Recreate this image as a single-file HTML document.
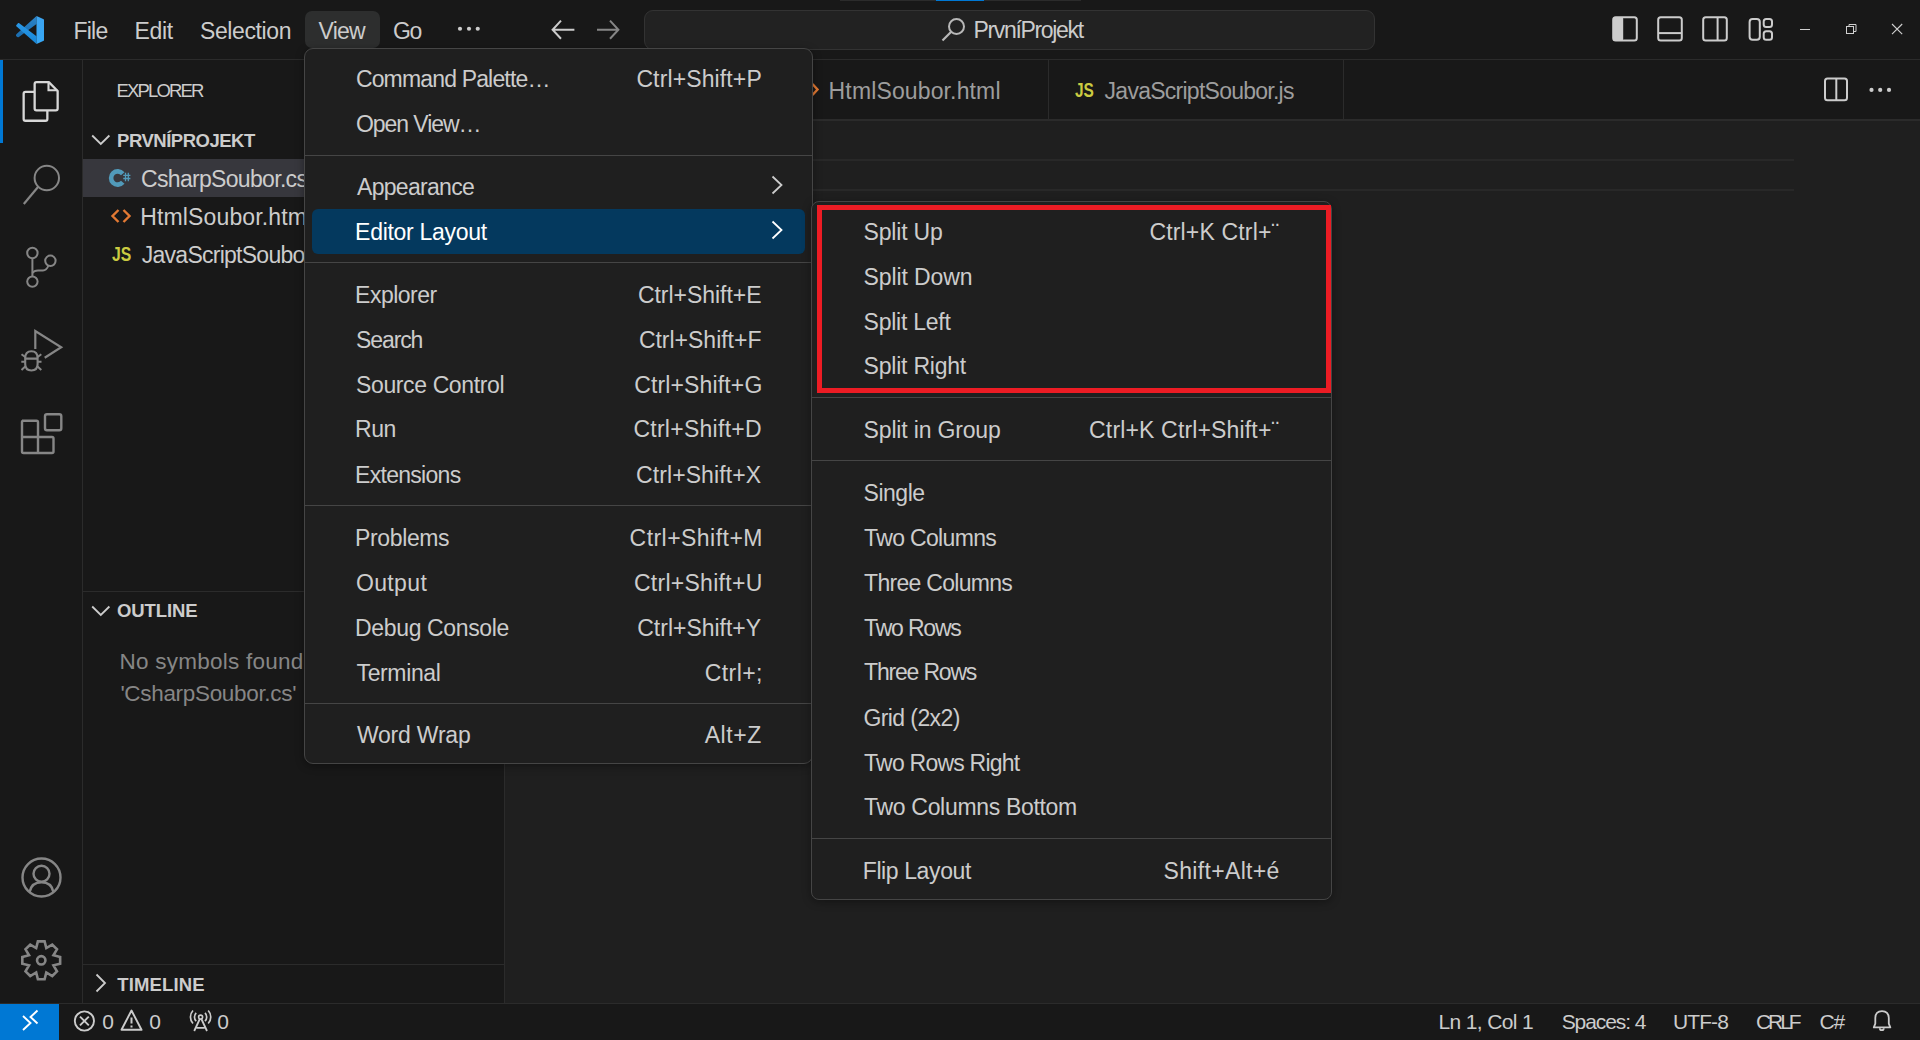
<!DOCTYPE html>
<html><head><meta charset="utf-8"><style>
html,body{margin:0;padding:0;width:1920px;height:1040px;overflow:hidden;background:#1f1f1f;}
body{position:relative;font-family:'Liberation Sans', sans-serif;}
body>div{position:absolute;box-sizing:border-box;}
.t{white-space:pre;}
</style></head><body>
<div style="left:0px;top:0px;width:1920px;height:1040px;background:#1f1f1f;"></div>
<div style="left:0px;top:0px;width:1920px;height:59px;background:#181818;"></div>
<div style="left:0px;top:59px;width:1920px;height:1px;background:#2b2b2b;"></div>
<div style="left:840px;top:0px;width:241px;height:1px;background:#2b2b2b;"></div>
<div style="left:936px;top:0px;width:48px;height:1px;background:#0078d4;"></div>
<div style="left:0px;top:60px;width:83px;height:943px;background:#181818;"></div>
<div style="left:82px;top:60px;width:1px;height:943px;background:#2b2b2b;"></div>
<div style="left:0px;top:60px;width:3px;height:83px;background:#0078d4;"></div>
<div style="left:83px;top:60px;width:421px;height:943px;background:#181818;"></div>
<div style="left:504px;top:60px;width:1px;height:943px;background:#2b2b2b;"></div>
<div style="left:505px;top:60px;width:1415px;height:59px;background:#181818;"></div>
<div style="left:505px;top:119px;width:1415px;height:2px;background:#2b2b2b;"></div>
<div style="left:1048px;top:60px;width:1px;height:59px;background:#2b2b2b;"></div>
<div style="left:1343px;top:60px;width:1px;height:59px;background:#2b2b2b;"></div>
<div style="left:560px;top:159px;width:1234px;height:2px;background:#282828;"></div>
<div style="left:560px;top:189px;width:1234px;height:2px;background:#282828;"></div>
<div style="left:0px;top:1003px;width:1920px;height:1px;background:#2b2b2b;"></div>
<div style="left:0px;top:1004px;width:1920px;height:36px;background:#181818;"></div>
<div style="left:0px;top:1004px;width:59px;height:36px;background:#0078d4;"></div>
<svg style="position:absolute;left:16px;top:16px;" width="28" height="28" viewBox="0 0 28 28">
<defs><linearGradient id="lg1" x1="0" y1="0" x2="0" y2="1"><stop offset="0" stop-color="#2b84c8"/><stop offset="1" stop-color="#1a6cae"/></linearGradient>
<linearGradient id="lg2" x1="0" y1="0" x2="0" y2="1"><stop offset="0" stop-color="#2b98e6"/><stop offset="1" stop-color="#1686d8"/></linearGradient>
<linearGradient id="lg3" x1="0" y1="0" x2="0" y2="1"><stop offset="0" stop-color="#3ca3ef"/><stop offset="1" stop-color="#36a8f6"/></linearGradient></defs>
<path d="M20.5 0 L20.5 8 L2.9 21 Q1.6 21.6 0.6 20.6 L0 19.8 Q-0.3 18.9 0.6 18.1 Z" fill="url(#lg1)"/>
<path d="M2.9 7 L20.5 20.2 L20.5 28 L0.6 10.6 Q-0.3 9.6 0.6 8.8 L1.2 8.2 Q2 6.6 2.9 7 Z" fill="url(#lg2)"/>
<path d="M20.5 0 L27.2 3.1 Q28.2 3.6 28.2 4.6 L28.2 23.4 Q28.2 24.4 27.2 24.9 L20.5 28 Z" fill="url(#lg3)"/>
</svg>
<div class="t" style="left:73.38px;top:20px;font-size:23px;line-height:23px;color:#cccccc;letter-spacing:-0.708px;">File</div>
<div class="t" style="left:134.38px;top:20px;font-size:23px;line-height:23px;color:#cccccc;letter-spacing:-0.292px;">Edit</div>
<div class="t" style="left:200.00px;top:20px;font-size:23px;line-height:23px;color:#cccccc;letter-spacing:-0.391px;">Selection</div>
<div style="left:305px;top:11px;width:75px;height:37px;background:#2d2e2e;border-radius:7px;"></div>
<div class="t" style="left:318.48px;top:20px;font-size:23px;line-height:23px;color:#cccccc;letter-spacing:-0.758px;">View</div>
<div class="t" style="left:392.88px;top:20px;font-size:23px;line-height:23px;color:#cccccc;letter-spacing:-1.375px;">Go</div>
<svg style="position:absolute;left:450px;top:20px;" width="40" height="20" viewBox="0 0 40 20"><circle cx="10" cy="8.75" r="2.1" fill="#cccccc"/><circle cx="19" cy="8.75" r="2.1" fill="#cccccc"/><circle cx="27.75" cy="8.75" r="2.1" fill="#cccccc"/></svg>
<svg style="position:absolute;left:548px;top:16px;" width="30" height="28" viewBox="0 0 30 28"><path d="M5 13.75 H26.4 M13 4.6 L4.6 13.75 L13 22.75" stroke="#cccccc" stroke-width="2" fill="none"/></svg>
<svg style="position:absolute;left:593px;top:16px;" width="30" height="28" viewBox="0 0 30 28"><path d="M4 13.75 H25.4 M17 4.6 L25.4 13.75 L17 22.75" stroke="#868686" stroke-width="2" fill="none"/></svg>
<div style="left:644px;top:10px;width:731px;height:40px;background:#222222;border:1px solid #333333;border-radius:9px;box-sizing:border-box;"></div>
<svg style="position:absolute;left:938px;top:14px;" width="32" height="32" viewBox="0 0 32 32"><circle cx="18.5" cy="12.5" r="7.5" stroke="#b8b8b8" stroke-width="2" fill="none"/><path d="M13.2 17.8 L4.5 26.5" stroke="#b8b8b8" stroke-width="2.2"/></svg>
<div class="t" style="left:973.42px;top:19.200000000000003px;font-size:23px;line-height:23px;color:#cccccc;letter-spacing:-1.323px;">PrvníProjekt</div>
<svg style="position:absolute;left:1610px;top:14px;" width="30" height="30" viewBox="0 0 30 30"><rect x="3.2" y="3.2" width="23.6" height="23.4" rx="2.5" stroke="#cccccc" stroke-width="2" fill="none"/><rect x="3.2" y="3.2" width="10" height="23.4" fill="#cccccc" rx="1.5"/></svg>
<svg style="position:absolute;left:1655px;top:14px;" width="30" height="30" viewBox="0 0 30 30"><rect x="3.2" y="3.2" width="23.6" height="23.4" rx="2.5" stroke="#cccccc" stroke-width="2" fill="none"/><path d="M3.2 19.1 H26.8" stroke="#cccccc" stroke-width="2"/></svg>
<svg style="position:absolute;left:1700px;top:14px;" width="30" height="30" viewBox="0 0 30 30"><rect x="3.2" y="3.2" width="23.6" height="23.4" rx="2.5" stroke="#cccccc" stroke-width="2" fill="none"/><path d="M17.6 3.2 V26.6" stroke="#cccccc" stroke-width="2"/></svg>
<svg style="position:absolute;left:1745px;top:14px;" width="30" height="30" viewBox="0 0 30 30"><rect x="4.6" y="5" width="10.2" height="20.7" rx="3" stroke="#cccccc" stroke-width="2" fill="none"/><rect x="18.7" y="5" width="8.3" height="8" rx="2.5" stroke="#cccccc" stroke-width="2" fill="none"/><rect x="18.7" y="17.2" width="8.3" height="8.5" rx="2.5" stroke="#cccccc" stroke-width="2" fill="none"/></svg>
<div style="left:1800px;top:29px;width:10px;height:1px;background:#d0d0d0;"></div>
<svg style="position:absolute;left:1840px;top:20px;" width="20" height="20" viewBox="0 0 20 20"><rect x="6.5" y="6.5" width="7" height="7" stroke="#d0d0d0" stroke-width="1" fill="none"/><path d="M9 6.5 V4.5 H16 V11.5 H13.5" stroke="#d0d0d0" stroke-width="1" fill="none"/></svg>
<svg style="position:absolute;left:1887px;top:19px;" width="20" height="20" viewBox="0 0 20 20"><path d="M5 5 L15.2 15.2 M15.2 5 L5 15.2" stroke="#d0d0d0" stroke-width="1.1"/></svg>
<svg style="position:absolute;left:18px;top:78px;" width="48" height="48" viewBox="0 0 48 48"><path d="M16.65 6 Q16.65 4.15 18.5 4.15 H30.8 L39.65 13 V30.5 Q39.65 32.35 37.8 32.35 H18.5 Q16.65 32.35 16.65 30.5 Z" stroke="#d7d7d7" stroke-width="2.3" fill="none" stroke-linejoin="round"/><path d="M30.5 4.5 V12.3 H39.3" stroke="#d7d7d7" stroke-width="2.1" fill="none"/><path d="M16.65 13.95 H7.5 Q5.65 13.95 5.65 15.8 V40.9 Q5.65 42.75 7.5 42.75 H27.5 Q29.35 42.75 29.35 40.9 V32.35" stroke="#d7d7d7" stroke-width="2.3" fill="none"/></svg>
<svg style="position:absolute;left:18px;top:158px;" width="48" height="52" viewBox="0 0 48 52"><circle cx="28.8" cy="20" r="12.2" stroke="#868686" stroke-width="2" fill="none"/><path d="M20.2 28.8 L5.8 46" stroke="#868686" stroke-width="2.2"/></svg>
<svg style="position:absolute;left:18px;top:240px;" width="48" height="52" viewBox="0 0 48 52"><circle cx="14.4" cy="13" r="5.2" stroke="#868686" stroke-width="2" fill="none"/><circle cx="14.4" cy="41.6" r="5.2" stroke="#868686" stroke-width="2" fill="none"/><circle cx="32.4" cy="20.8" r="5.2" stroke="#868686" stroke-width="2" fill="none"/><path d="M14.4 18.2 V36.4" stroke="#868686" stroke-width="2"/><path d="M14.4 33 Q16 30.5 20 30.5 H25 Q28.5 30.5 30.5 25.5" stroke="#868686" stroke-width="2" fill="none"/></svg>
<svg style="position:absolute;left:18px;top:322px;" width="48" height="54" viewBox="0 0 48 54"><path d="M17.3 26.9 V9 L43.2 25.3 L26.7 35.8" stroke="#868686" stroke-width="2.2" fill="none" stroke-linejoin="miter"/><path d="M7.2 36 V42 Q7.2 48.5 13.4 48.5 Q19.6 48.5 19.6 42 V36 Q19.6 29.2 13.4 29.2 Q7.2 29.2 7.2 36 Z M7.2 36.6 H19.6" stroke="#868686" stroke-width="2.1" fill="none"/><path d="M3.5 32.3 L7.5 35.3 M23.3 32.3 L19.3 35.3 M3.3 39.8 H7.2 M23.5 39.8 H19.6 M3.5 48 L7.5 44.3 M23.3 48 L19.3 44.3" stroke="#868686" stroke-width="2"/></svg>
<svg style="position:absolute;left:18px;top:407px;" width="48" height="52" viewBox="0 0 48 52"><path d="M4 13.8 H18.5 Q20 13.8 20 15.3 V30 H34 Q35.5 30 35.5 31.5 V44.5 Q35.5 46 34 46 H5.5 Q4 46 4 44.5 V15.3 Q4 13.8 5.5 13.8 Z M4 30 H20 V46" stroke="#868686" stroke-width="2.4" fill="none"/><rect x="27" y="7.3" width="16.3" height="16" rx="2" stroke="#868686" stroke-width="2.4" fill="none"/></svg>
<svg style="position:absolute;left:18px;top:852px;" width="48" height="52" viewBox="0 0 48 52"><circle cx="23.5" cy="25.5" r="19" stroke="#868686" stroke-width="2.4" fill="none"/><circle cx="23.5" cy="21.7" r="8" stroke="#868686" stroke-width="2.4" fill="none"/><path d="M11.6 40 Q13.5 30.3 23.5 30.3 Q33.5 30.3 35.4 40" stroke="#868686" stroke-width="2.4" fill="none"/></svg>
<svg style="position:absolute;left:18px;top:936px;" width="48" height="50" viewBox="0 0 48 50"><polygon points="19.89,5.39 26.59,5.39 28.29,12.10 34.24,8.56 38.98,13.30 35.44,19.25 42.15,20.95 42.15,27.65 35.44,29.35 38.98,35.30 34.24,40.04 28.29,36.50 26.59,43.21 19.89,43.21 18.19,36.50 12.24,40.04 7.50,35.30 11.04,29.35 4.33,27.65 4.33,20.95 11.04,19.25 7.50,13.30 12.24,8.56 18.19,12.10" stroke="#868686" stroke-width="2.6" fill="none" stroke-linejoin="miter"/><circle cx="23.24" cy="24.3" r="4.2" stroke="#868686" stroke-width="2.6" fill="none"/></svg>
<div class="t" style="left:116.40px;top:82px;font-size:18.5px;line-height:18.5px;color:#cccccc;letter-spacing:-1.825px;">EXPLORER</div>
<svg style="position:absolute;left:88px;top:128px;" width="24" height="24" viewBox="0 0 24 24"><path d="M4.2 7.5 L12.8 16 L21.4 7.5" stroke="#cccccc" stroke-width="1.8" fill="none"/></svg>
<div class="t" style="left:117.05px;top:131.8px;font-size:18.5px;line-height:18.5px;color:#cccccc;font-weight:700;letter-spacing:-0.493px;">PRVNÍPROJEKT</div>
<div style="left:83px;top:159px;width:421px;height:38px;background:#37373d;"></div>
<svg style="position:absolute;left:108px;top:165px;" width="26" height="26" viewBox="0 0 26 26"><path d="M14.76 8.76 A6.6 6.6 0 1 0 14.76 17.24" stroke="#519aba" stroke-width="4.6" fill="none"/><path d="M17.5 7.7 V16.2 M20.3 7.7 V16.2 M15.2 10.3 H22.4 M15.2 13.5 H22.4" stroke="#519aba" stroke-width="1.3"/></svg>
<div class="t" style="left:141.07px;top:167.5px;font-size:23px;line-height:23px;color:#cccccc;letter-spacing:-0.684px;">CsharpSoubor.cs</div>
<svg style="position:absolute;left:108px;top:203px;" width="26" height="26" viewBox="0 0 26 26"><path d="M10.5 7 L4.5 13 L10.5 19 M15.5 7 L21.5 13 L15.5 19" stroke="#e37933" stroke-width="2.4" fill="none"/></svg>
<div class="t" style="left:140.32px;top:205.5px;font-size:23px;line-height:23px;color:#cccccc;letter-spacing:0.134px;">HtmlSoubor.html</div>
<div class="t" style="left:111.50px;top:244px;font-size:20px;line-height:20px;color:#cbcb41;transform:scaleX(0.7872);transform-origin:0 0;font-weight:700;">JS</div>
<div class="t" style="left:141.82px;top:243.60000000000002px;font-size:23px;line-height:23px;color:#cccccc;letter-spacing:-0.744px;">JavaScriptSoubor.js</div>
<div style="left:83px;top:591px;width:421px;height:1px;background:#2b2b2b;"></div>
<svg style="position:absolute;left:88px;top:599px;" width="24" height="24" viewBox="0 0 24 24"><path d="M4.2 7.5 L12.8 16 L21.4 7.5" stroke="#cccccc" stroke-width="1.8" fill="none"/></svg>
<div class="t" style="left:117.00px;top:601.5px;font-size:18.5px;line-height:18.5px;color:#cccccc;font-weight:700;letter-spacing:-0.083px;">OUTLINE</div>
<div class="t" style="left:119.62px;top:651px;font-size:22.5px;line-height:22.5px;color:#868686;letter-spacing:0.242px;">No symbols found</div>
<div class="t" style="left:120.38px;top:682.5px;font-size:22.5px;line-height:22.5px;color:#868686;letter-spacing:-0.320px;">'CsharpSoubor.cs'</div>
<div style="left:83px;top:964px;width:421px;height:1px;background:#2b2b2b;"></div>
<svg style="position:absolute;left:88px;top:971px;" width="24" height="24" viewBox="0 0 24 24"><path d="M8.5 3.5 L17 12 L8.5 20.5" stroke="#cccccc" stroke-width="1.8" fill="none"/></svg>
<div class="t" style="left:117.25px;top:976px;font-size:18.5px;line-height:18.5px;color:#cccccc;font-weight:700;letter-spacing:0.132px;">TIMELINE</div>
<svg style="position:absolute;left:805px;top:80px;" width="20" height="26" viewBox="0 0 20 26"><path d="M7.5 4 L12.5 9.5 L7.5 15" stroke="#e37933" stroke-width="2.4" fill="none"/></svg>
<div class="t" style="left:828.62px;top:79.7px;font-size:23px;line-height:23px;color:#9d9d9d;letter-spacing:0.134px;">HtmlSoubor.html</div>
<div class="t" style="left:1074.61px;top:80px;font-size:20px;line-height:20px;color:#cbcb41;transform:scaleX(0.7701);transform-origin:0 0;font-weight:700;">JS</div>
<div class="t" style="left:1104.62px;top:79.7px;font-size:23px;line-height:23px;color:#9d9d9d;letter-spacing:-0.744px;">JavaScriptSoubor.js</div>
<svg style="position:absolute;left:1820px;top:74px;" width="32" height="32" viewBox="0 0 32 32"><rect x="5" y="4.5" width="22" height="21.7" rx="2.5" stroke="#cccccc" stroke-width="2" fill="none"/><path d="M16.3 4.5 V26" stroke="#cccccc" stroke-width="2"/></svg>
<svg style="position:absolute;left:1860px;top:80px;" width="40" height="20" viewBox="0 0 40 20"><circle cx="11.5" cy="9.9" r="2.1" fill="#cccccc"/><circle cx="20.2" cy="9.9" r="2.1" fill="#cccccc"/><circle cx="29" cy="9.9" r="2.1" fill="#cccccc"/></svg>
<svg style="position:absolute;left:14px;top:1006px;" width="32" height="32" viewBox="0 0 32 32"><path d="M9 10 L16.5 17 L9 24 M23.5 4.5 L16.5 11 L23.5 17.5" stroke="#ffffff" stroke-width="1.9" fill="none"/></svg>
<svg style="position:absolute;left:70px;top:1007px;" width="30" height="30" viewBox="0 0 30 30"><circle cx="14.4" cy="14" r="9.6" stroke="#cccccc" stroke-width="1.9" fill="none"/><path d="M10 9.6 L18.8 18.4 M18.8 9.6 L10 18.4" stroke="#cccccc" stroke-width="1.9"/></svg>
<div class="t" style="left:102.25px;top:1011px;font-size:21px;line-height:21px;color:#cccccc;">0</div>
<svg style="position:absolute;left:118px;top:1006px;" width="28" height="28" viewBox="0 0 28 28"><path d="M13.5 4.5 L23.5 23.8 H3.5 Z" stroke="#cccccc" stroke-width="1.9" fill="none" stroke-linejoin="round"/><path d="M13.5 11.5 V17.5 M13.5 19.5 V21.5" stroke="#cccccc" stroke-width="2"/></svg>
<div class="t" style="left:149.25px;top:1011px;font-size:21px;line-height:21px;color:#cccccc;">0</div>
<svg style="position:absolute;left:186px;top:1006px;" width="30" height="30" viewBox="0 0 30 30"><path d="M7 4.5 A9.5 9.5 0 0 0 7 17.5 M22.2 4.5 A9.5 9.5 0 0 1 22.2 17.5 M10.2 6.8 A6 6 0 0 0 10.2 15.2 M19 6.8 A6 6 0 0 1 19 15.2" stroke="#cccccc" stroke-width="1.7" fill="none"/><circle cx="14.6" cy="11.1" r="2" stroke="#cccccc" stroke-width="1.6" fill="none"/><path d="M13.8 13 L8.2 25 M15.4 13 L21 25 M10.6 21.9 H18.6" stroke="#cccccc" stroke-width="1.8"/></svg>
<div class="t" style="left:217.25px;top:1011px;font-size:21px;line-height:21px;color:#cccccc;">0</div>
<div class="t" style="left:1438.55px;top:1011px;font-size:21px;line-height:21px;color:#cccccc;letter-spacing:-0.655px;">Ln 1, Col 1</div>
<div class="t" style="left:1561.70px;top:1011px;font-size:21px;line-height:21px;color:#cccccc;letter-spacing:-1.072px;">Spaces: 4</div>
<div class="t" style="left:1673.08px;top:1011px;font-size:21px;line-height:21px;color:#cccccc;letter-spacing:-0.925px;">UTF-8</div>
<div class="t" style="left:1756.00px;top:1011px;font-size:21px;line-height:21px;color:#cccccc;letter-spacing:-3.100px;">CRLF</div>
<div class="t" style="left:1819.50px;top:1011px;font-size:21px;line-height:21px;color:#cccccc;letter-spacing:-1.250px;">C#</div>
<svg style="position:absolute;left:1868px;top:1008px;" width="30" height="30" viewBox="0 0 30 30"><path d="M5.8 19.4 L7.3 15.6 V10.5 Q7.3 3.1 14 3.1 Q20.8 3.1 20.8 10.5 V15.6 L22.3 19.4 Z" stroke="#cccccc" stroke-width="1.8" fill="none" stroke-linejoin="round"/><path d="M11.8 20.2 A2 2 0 0 0 15.8 20.2" stroke="#cccccc" stroke-width="1.7" fill="none"/></svg>
<div style="left:304px;top:48px;width:509px;height:716px;background:#1f1f1f;border:1px solid #454545;border-radius:9px;box-shadow:0 2px 8px rgba(0,0,0,0.36);"></div>
<div style="left:312px;top:209px;width:493px;height:45px;background:#04395e;border-radius:6px;"></div>
<div style="left:305px;top:155px;width:507px;height:1px;background:#454545;"></div>
<div style="left:305px;top:262px;width:507px;height:1px;background:#454545;"></div>
<div style="left:305px;top:505px;width:507px;height:1px;background:#454545;"></div>
<div style="left:305px;top:703px;width:507px;height:1px;background:#454545;"></div>
<div class="t" style="left:355.88px;top:67.9px;font-size:23px;line-height:23px;color:#cccccc;letter-spacing:-0.838px;">Command Palette…</div>
<div class="t" style="left:636.38px;top:67.9px;font-size:23px;line-height:23px;color:#cccccc;letter-spacing:0.125px;">Ctrl+Shift+P</div>
<div class="t" style="left:355.88px;top:113.1px;font-size:23px;line-height:23px;color:#cccccc;letter-spacing:-1.042px;">Open View…</div>
<div class="t" style="left:357.00px;top:175.6px;font-size:23px;line-height:23px;color:#cccccc;letter-spacing:-0.700px;">Appearance</div>
<div class="t" style="left:355.12px;top:220.8px;font-size:23px;line-height:23px;color:#ffffff;letter-spacing:-0.283px;">Editor Layout</div>
<div class="t" style="left:355.12px;top:284.3px;font-size:23px;line-height:23px;color:#cccccc;letter-spacing:-0.511px;">Explorer</div>
<div class="t" style="left:637.88px;top:284.3px;font-size:23px;line-height:23px;color:#cccccc;letter-spacing:-0.034px;">Ctrl+Shift+E</div>
<div class="t" style="left:356.00px;top:329px;font-size:23px;line-height:23px;color:#cccccc;letter-spacing:-1.095px;">Search</div>
<div class="t" style="left:638.88px;top:329px;font-size:23px;line-height:23px;color:#cccccc;letter-spacing:-0.011px;">Ctrl+Shift+F</div>
<div class="t" style="left:356.00px;top:373.7px;font-size:23px;line-height:23px;color:#cccccc;letter-spacing:-0.375px;">Source Control</div>
<div class="t" style="left:634.17px;top:373.7px;font-size:23px;line-height:23px;color:#cccccc;letter-spacing:0.143px;">Ctrl+Shift+G</div>
<div class="t" style="left:355.12px;top:418.4px;font-size:23px;line-height:23px;color:#cccccc;letter-spacing:-0.475px;">Run</div>
<div class="t" style="left:633.38px;top:418.4px;font-size:23px;line-height:23px;color:#cccccc;letter-spacing:0.273px;">Ctrl+Shift+D</div>
<div class="t" style="left:355.12px;top:463.6px;font-size:23px;line-height:23px;color:#cccccc;letter-spacing:-0.717px;">Extensions</div>
<div class="t" style="left:636.08px;top:463.6px;font-size:23px;line-height:23px;color:#cccccc;letter-spacing:0.084px;">Ctrl+Shift+X</div>
<div class="t" style="left:355.12px;top:527px;font-size:23px;line-height:23px;color:#cccccc;letter-spacing:-0.382px;">Problems</div>
<div class="t" style="left:629.58px;top:527px;font-size:23px;line-height:23px;color:#cccccc;letter-spacing:0.459px;">Ctrl+Shift+M</div>
<div class="t" style="left:355.88px;top:571.5px;font-size:23px;line-height:23px;color:#cccccc;letter-spacing:0.370px;">Output</div>
<div class="t" style="left:633.88px;top:571.5px;font-size:23px;line-height:23px;color:#cccccc;letter-spacing:0.284px;">Ctrl+Shift+U</div>
<div class="t" style="left:355.12px;top:616.5px;font-size:23px;line-height:23px;color:#cccccc;letter-spacing:-0.360px;">Debug Console</div>
<div class="t" style="left:637.27px;top:616.5px;font-size:23px;line-height:23px;color:#cccccc;letter-spacing:-0.014px;">Ctrl+Shift+Y</div>
<div class="t" style="left:356.50px;top:661.7px;font-size:23px;line-height:23px;color:#cccccc;letter-spacing:-0.368px;">Terminal</div>
<div class="t" style="left:704.77px;top:661.7px;font-size:23px;line-height:23px;color:#cccccc;letter-spacing:0.420px;">Ctrl+;</div>
<div class="t" style="left:356.88px;top:724.2px;font-size:23px;line-height:23px;color:#cccccc;letter-spacing:-0.197px;">Word Wrap</div>
<div class="t" style="left:704.70px;top:724.2px;font-size:23px;line-height:23px;color:#cccccc;letter-spacing:0.544px;">Alt+Z</div>
<svg style="position:absolute;left:765px;top:172px;" width="24" height="26" viewBox="0 0 24 26"><path d="M7.5 4.5 L16.5 13 L7.5 21.5" stroke="#cccccc" stroke-width="1.8" fill="none"/></svg>
<svg style="position:absolute;left:765px;top:217px;" width="24" height="26" viewBox="0 0 24 26"><path d="M7.5 4.5 L16.5 13 L7.5 21.5" stroke="#ffffff" stroke-width="1.8" fill="none"/></svg>
<div style="left:811px;top:201px;width:521px;height:699px;background:#1f1f1f;border:1px solid #454545;border-radius:8px;box-shadow:0 2px 8px rgba(0,0,0,0.36);"></div>
<div style="left:812px;top:397px;width:519px;height:1px;background:#454545;"></div>
<div style="left:812px;top:460px;width:519px;height:1px;background:#454545;"></div>
<div style="left:812px;top:838px;width:519px;height:1px;background:#454545;"></div>
<div class="t" style="left:863.60px;top:220.8px;font-size:23px;line-height:23px;color:#cccccc;letter-spacing:-0.204px;">Split Up</div>
<div class="t" style="left:1149.38px;top:220.8px;font-size:23px;line-height:23px;color:#cccccc;letter-spacing:0.171px;">Ctrl+K Ctrl+¨</div>
<div class="t" style="left:863.60px;top:265.8px;font-size:23px;line-height:23px;color:#cccccc;letter-spacing:-0.119px;">Split Down</div>
<div class="t" style="left:863.60px;top:310.5px;font-size:23px;line-height:23px;color:#cccccc;letter-spacing:-0.242px;">Split Left</div>
<div class="t" style="left:863.60px;top:355.2px;font-size:23px;line-height:23px;color:#cccccc;letter-spacing:-0.223px;">Split Right</div>
<div class="t" style="left:863.60px;top:419.3px;font-size:23px;line-height:23px;color:#cccccc;letter-spacing:-0.167px;">Split in Group</div>
<div class="t" style="left:1089.08px;top:419.3px;font-size:23px;line-height:23px;color:#cccccc;letter-spacing:0.158px;">Ctrl+K Ctrl+Shift+¨</div>
<div class="t" style="left:863.60px;top:482px;font-size:23px;line-height:23px;color:#cccccc;letter-spacing:-0.495px;">Single</div>
<div class="t" style="left:864.10px;top:527.25px;font-size:23px;line-height:23px;color:#cccccc;letter-spacing:-0.660px;">Two Columns</div>
<div class="t" style="left:864.10px;top:571.6px;font-size:23px;line-height:23px;color:#cccccc;letter-spacing:-0.706px;">Three Columns</div>
<div class="t" style="left:864.10px;top:616.8px;font-size:23px;line-height:23px;color:#cccccc;letter-spacing:-1.193px;">Two Rows</div>
<div class="t" style="left:864.10px;top:661.4px;font-size:23px;line-height:23px;color:#cccccc;letter-spacing:-1.192px;">Three Rows</div>
<div class="t" style="left:863.48px;top:706.6px;font-size:23px;line-height:23px;color:#cccccc;letter-spacing:-0.594px;">Grid (2x2)</div>
<div class="t" style="left:864.10px;top:751.8px;font-size:23px;line-height:23px;color:#cccccc;letter-spacing:-0.777px;">Two Rows Right</div>
<div class="t" style="left:864.10px;top:795.6px;font-size:23px;line-height:23px;color:#cccccc;letter-spacing:-0.324px;">Two Columns Bottom</div>
<div class="t" style="left:862.73px;top:859.75px;font-size:23px;line-height:23px;color:#cccccc;letter-spacing:-0.390px;">Flip Layout</div>
<div class="t" style="left:1163.60px;top:859.75px;font-size:23px;line-height:23px;color:#cccccc;letter-spacing:0.320px;">Shift+Alt+é</div>
<div style="left:817px;top:205px;width:514px;height:188px;border:5px solid #ec1c24;box-sizing:border-box;"></div>
</body></html>
